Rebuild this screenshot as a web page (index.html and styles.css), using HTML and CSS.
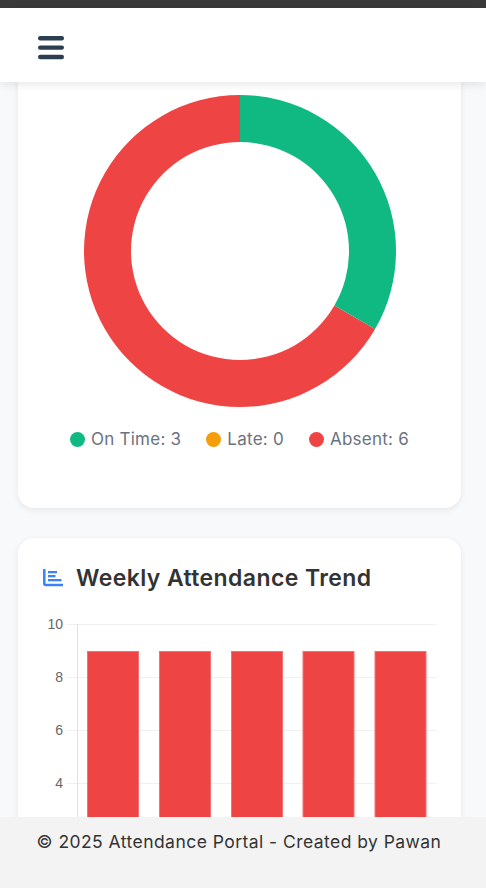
FILE: index.html
```html
<!DOCTYPE html>
<html lang="en">
<head>
    <meta charset="UTF-8">
    <meta name="viewport" content="width=device-width, initial-scale=1.0">
    <title>Attendance Portal</title>
    <link rel="stylesheet" href="styles.css">
</head>
<body>
    <div class="topStrip"></div>
    <header class="navbar">
        <svg class="menuIcon" viewBox="0 0 26 24" width="26" height="24" aria-label="Menu">
            <rect x="0" y="0" width="26" height="4.4" rx="2.2"></rect>
            <rect x="0" y="9.4" width="26" height="4.4" rx="2.2"></rect>
            <rect x="0" y="18.8" width="26" height="4.4" rx="2.2"></rect>
        </svg>
    </header>

    <main class="content">
        <section class="card donutCard">
            <svg class="donut" viewBox="0 0 314 314" width="314" height="314">
                <path fill="#ef4444" d="M157 1 A156 156 0 1 0 292.1 235 L251.4 211.5 A109 109 0 1 1 157 48 Z"></path>
                <path fill="#10b981" d="M157 1 A156 156 0 0 1 292.1 235 L251.4 211.5 A109 109 0 0 0 157 48 Z"></path>
            </svg>
            <ul class="legend">
                <li class="legendItem"><span class="dot dotGreen"></span>On Time: 3</li>
                <li class="legendItem"><span class="dot dotOrange"></span>Late: 0</li>
                <li class="legendItem"><span class="dot dotRed"></span>Absent: 6</li>
            </ul>
        </section>

        <section class="card trendCard">
            <h2 class="cardTitle">
                <svg class="titleIcon" viewBox="0 0 20 18" width="20" height="18">
                    <path d="M1.3 0 V14.5 Q1.3 16 2.8 16 H20" fill="none" stroke="#3b82f6" stroke-width="2.5"></path>
                    <rect x="5" y="2" width="9" height="2.3" fill="#3b82f6"></rect>
                    <rect x="5" y="6" width="7.5" height="2.3" fill="#3b82f6"></rect>
                    <rect x="5" y="10" width="13.5" height="2.3" fill="#3b82f6"></rect>
                </svg>
                Weekly Attendance Trend
            </h2>
            <svg class="barChart" viewBox="0 0 395 270" width="395" height="270">
                <g class="gridLines">
                    <path d="M24 7.5 H393"></path>
                    <path d="M24 60.5 H393"></path>
                    <path d="M24 113.5 H393"></path>
                    <path d="M24 166.5 H393"></path>
                </g>
                <path class="axisLine" d="M34.5 7 V270"></path>
                <g class="ticks">
                    <text x="20" y="12">10</text>
                    <text x="20" y="65">8</text>
                    <text x="20" y="118">6</text>
                    <text x="20" y="171">4</text>
                </g>
                <g class="bars">
                    <rect x="44.5" y="34.5" width="51" height="240"></rect>
                    <rect x="116.5" y="34.5" width="51" height="240"></rect>
                    <rect x="188.5" y="34.5" width="51" height="240"></rect>
                    <rect x="260" y="34.5" width="51" height="240"></rect>
                    <rect x="332" y="34.5" width="51" height="240"></rect>
                </g>
            </svg>
        </section>
    </main>

    <footer class="footer">© 2025 Attendance Portal - Created by Pawan</footer>
</body>
</html>
```

FILE: styles.css
```css
* {
    box-sizing: border-box;
}

html, body {
    height: 100%;
}

body {
    margin: 0;
    display: flex;
    flex-direction: column;
    height: 888px;
    overflow: hidden;
    background-color: #f8f9fb;
    font-family: Inter, "Open Sans", sans-serif;
    color: #333;
}

.topStrip {
    height: 8px;
    flex: none;
    background-color: #3a3a3a;
}

.navbar {
    flex: none;
    height: 74px;
    padding: 5px 38px 0;
    display: flex;
    align-items: center;
    position: relative;
    z-index: 2;
    background-color: #fff;
    box-shadow: 0 2px 10px rgba(0, 0, 0, 0.1);
}

.menuIcon {
    fill: #2c3e50;
    display: block;
}

.content {
    flex: 1;
    min-height: 0;
    overflow: hidden;
    padding: 0 25px 0 18px;
}

.card {
    background-color: #fff;
    border-radius: 16px;
    box-shadow: 0 2px 6px rgba(0, 0, 0, 0.08);
}

.donutCard {
    margin-top: -20px;
    height: 446px;
    padding-top: 32px;
    display: flex;
    flex-direction: column;
    align-items: center;
}

.donut {
    display: block;
    flex: none;
}

.legend {
    list-style: none;
    margin: 20px 0 0;
    padding: 0;
    display: flex;
    gap: 25px;
    font-size: 17px;
    line-height: 22px;
    letter-spacing: 0.25px;
    color: #6b7280;
}

.legendItem {
    display: flex;
    align-items: center;
    gap: 6px;
}

.dot {
    width: 15px;
    height: 15px;
    border-radius: 50%;
}

.dotGreen {
    background-color: #10b981;
}

.dotOrange {
    background-color: #f59e0b;
}

.dotRed {
    background-color: #ef4444;
}

.trendCard {
    margin-top: 30px;
    height: 400px;
    padding: 24px 0 0 25px;
}

.cardTitle {
    margin: 0;
    display: flex;
    align-items: center;
    gap: 13px;
    font-size: 23px;
    line-height: 32px;
    font-weight: 600;
    letter-spacing: 0.4px;
    color: #333;
}

.titleIcon {
    flex: none;
}

.barChart {
    display: block;
    margin-top: 23px;
}

.gridLines path {
    fill: none;
    stroke: #f0f0f0;
    stroke-width: 1;
}

.axisLine {
    fill: none;
    stroke: #e2e2e2;
    stroke-width: 1;
}

.ticks text {
    font-family: "Liberation Sans", Arial, sans-serif;
    font-size: 14px;
    fill: #666;
    text-anchor: end;
}

.bars rect {
    fill: #ef4444;
    stroke: #f87171;
    stroke-width: 1;
}

.footer {
    flex: none;
    height: 71px;
    padding: 14px 8px 0 0;
    position: relative;
    z-index: 2;
    text-align: center;
    font-size: 17.5px;
    line-height: 22px;
    letter-spacing: 0.45px;
    background-color: #f3f3f3;
    color: #333;
}
```
